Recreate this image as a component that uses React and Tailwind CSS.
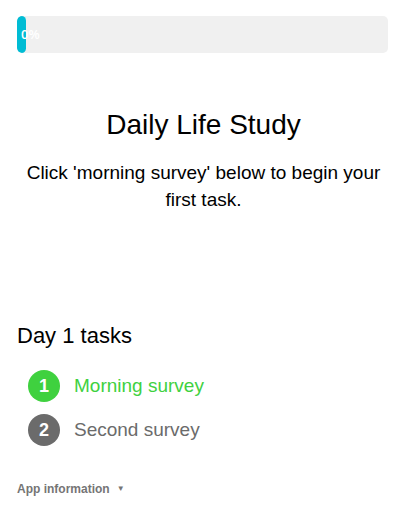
import React from 'react'

const tasks = [
  { id: 1, label: 'Morning survey', active: true },
  { id: 2, label: 'Second survey', active: false },
]

const App = () => {
  return (
    <main className="min-h-[512px] bg-white font-['Liberation_Sans',Arial,sans-serif] text-black">
      <div className="pl-[17px] pr-[19px] pt-[16px]">
        <div className="relative flex h-[37px] w-full items-center overflow-hidden rounded-[5px] bg-[#f0f0f0]">
          <div className="h-full w-[9px] rounded-[5px] bg-[#00bcd4]" />
          <span className="absolute left-[4px] font-['Open_Sans',sans-serif] text-[13px] font-semibold text-white">
            0%
          </span>
        </div>
      </div>

      <section className="mt-[56px] px-[17px] text-center">
        <h1 className="text-[28px] leading-[32px]">Daily Life Study</h1>
        <p className="mt-[18px] text-[19px] leading-[27px]">
          Click 'morning survey' below to begin your first task.
        </p>
      </section>

      <section className="mt-[110px] px-[17px]">
        <h2 className="text-[22px] leading-[26px]">Day 1 tasks</h2>
        <ul className="mt-[21px] flex flex-col gap-[12px] pl-[11px]">
          {tasks.map((task) => (
            <li key={task.id} className="flex items-center gap-[14px]">
              <span
                className={
                  task.active
                    ? 'flex h-[32px] w-[32px] items-center justify-center rounded-full bg-[#3fd13f] text-[18px] font-bold text-white'
                    : 'flex h-[32px] w-[32px] items-center justify-center rounded-full bg-[#6b6b6b] text-[18px] font-bold text-white'
                }
              >
                {task.id}
              </span>
              <span
                className={
                  task.active
                    ? 'text-[19px] text-[#3fd13f]'
                    : 'text-[19px] text-[#6b6b6b]'
                }
              >
                {task.label}
              </span>
            </li>
          ))}
        </ul>
      </section>

      <div className="mt-[34px] flex items-center gap-[7px] px-[17px] text-[12px] font-bold text-[#757575]">
        <span>App information</span>
        <span className="text-[8px]">▼</span>
      </div>
    </main>
  )
}

export default App
